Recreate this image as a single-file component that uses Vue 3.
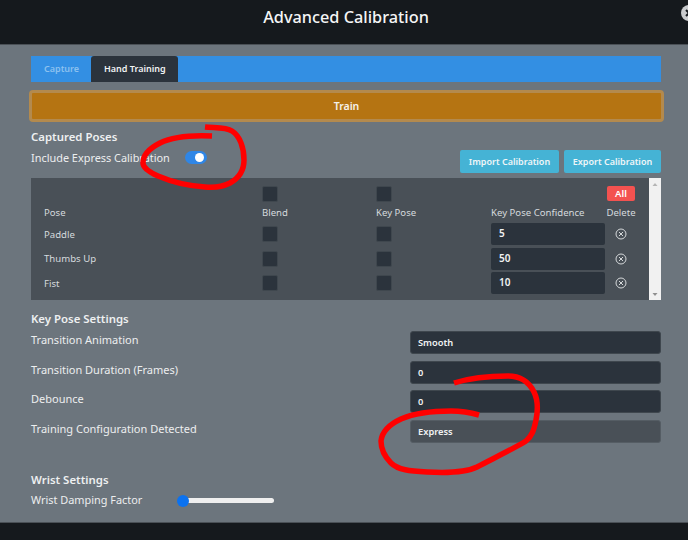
<script setup>
const poses = [
  { name: 'Paddle', confidence: '5' },
  { name: 'Thumbs Up', confidence: '50' },
  { name: 'Fist', confidence: '10' }
]
const settings = [
  { label: 'Transition Animation', value: 'Smooth' },
  { label: 'Transition Duration (Frames)', value: '0' },
  { label: 'Debounce', value: '0' },
  { label: 'Training Configuration Detected', value: 'Express', muted: true }
]
</script>

<template>
  <div class="page">
    <header class="head">
      <h1>Advanced Calibration</h1>
      <span class="close">
        <svg viewBox="0 0 16 16" width="16" height="16"><circle cx="8" cy="8" r="8" fill="#c9cbcd"/><path d="M5 5l6 6M11 5l-6 6" stroke="#15191d" stroke-width="2"/></svg>
      </span>
    </header>

    <main class="body">
      <nav class="tabs">
        <span class="tab">Capture</span>
        <span class="tab active">Hand Training</span>
      </nav>
      <button class="train">Train</button>

      <h2 class="first">Captured Poses</h2>
      <div class="toolbar">
        <div class="inc">
          <span>Include Express Calibration</span>
          <span class="switch"><i></i></span>
        </div>
        <div class="actions">
          <button class="info import">Import Calibration</button>
          <button class="info export">Export Calibration</button>
        </div>
      </div>

      <section class="panel">
        <div class="table">
          <div class="row top">
            <span></span>
            <span class="box"></span>
            <span class="box"></span>
            <span></span>
            <span class="del"><b class="all">All</b></span>
          </div>
          <div class="row labels">
            <span>Pose</span><span>Blend</span><span>Key Pose</span><span>Key Pose Confidence</span><span class="del">Delete</span>
          </div>
          <div v-for="p in poses" :key="p.name" class="row pose">
            <span>{{ p.name }}</span>
            <span class="box"></span>
            <span class="box"></span>
            <span class="conf">{{ p.confidence }}</span>
            <span class="del">
              <svg viewBox="0 0 12 12" width="12" height="12" fill="none" stroke="#d5d8da" stroke-width="1"><circle cx="6" cy="6" r="5"/><path d="M4 4l4 4M8 4l-4 4"/></svg>
            </span>
          </div>
        </div>
        <div class="scroll">
          <svg viewBox="0 0 12 122" width="12" height="122"><path d="M3.500 8L6 5l2.500 3z" fill="#b5b5b5"/><path d="M3.500 115L6 118l2.500-3z" fill="#8f8f8f"/></svg>
        </div>
      </section>

      <h2 class="key">Key Pose Settings</h2>
      <div class="settings">
        <div v-for="s in settings" :key="s.label" class="setting">
          <span class="lab">{{ s.label }}</span>
          <span class="field" :class="{ muted: s.muted }">{{ s.value }}</span>
        </div>
      </div>

      <h2 class="wrist">Wrist Settings</h2>
      <div class="damp">
        <span>Wrist Damping Factor</span>
        <span class="slider"><i></i></span>
      </div>
    </main>

    <footer class="foot"></footer>

    <svg class="ink" viewBox="0 0 688 540" width="688" height="540" fill="none" stroke="#ff0000" stroke-width="5.500" stroke-linecap="butt" stroke-linejoin="round">
      <path d="M205 127C215 128 226 127 232 131C240 136 244 148 244 160C244 170 239 178 230 183C222 187 214 188 205 187C190 186 172 182 158 176C149 172 143 168 143 163C143 155 150 148 160 143C172 137 190 135 212 136"/>
      <path d="M454 383C470 378 490 376 508 376C522 376 530 384 534 392C538 400 538 410 536 420C534 430 532 436 526 441C515 448 490 460 477 467C465 473 445 473 427 472C410 471 398 470 391 463C384 456 381 448 381 441C382 432 388 425 401 419C415 413 435 411 451 411C462 411 472 413 479 415"/>
    </svg>
  </div>
</template>

<style>
html, body { margin: 0; background: #6c757d; }
</style>

<style scoped>
.page {
  position: relative;
  width: 688px;
  height: 540px;
  overflow: hidden;
  display: flex;
  flex-direction: column;
  font-family: "Noto Sans", "Open Sans", sans-serif;
  font-size: 11px;
  color: #eceeef;
  background: #6c757d;
}
.head {
  position: relative;
  height: 44px;
  flex: none;
  background: #15191d;
  border-bottom: 1px solid #4a5056;
  display: flex;
  justify-content: center;
}
.head h1 {
  margin: 6px 0 0 4px;
  font-size: 16.300px;
  line-height: 22px;
  font-weight: 500;
  color: #f4f5f6;
}
.close { position: absolute; top: 5px; left: 681px; line-height: 0; }
.body { flex: 1; padding: 11px 27px 0 31px; display: flex; flex-direction: column; }
.tabs { height: 26px; background: #338fe3; display: flex; }
.tab {
  padding: 0 12px 0 13px;
  line-height: 26px;
  font-size: 9px;
  font-weight: 600;
  color: #8cc1ef;
}
.tab.active {
  background: #2b333c;
  color: #f2f4f5;
  border-radius: 3px 3px 0 0;
}
.train {
  margin: 8px -3px 0 -2px;
  height: 32px;
  padding: 0;
  border: 3px solid #b38a4e;
  border-radius: 4px;
  background: #b57412;
  color: #f5f1ea;
  font: 600 10.500px "Noto Sans", sans-serif;
}
h2 { margin: 0; font-size: 11.400px; line-height: 16px; font-weight: 600; color: #eef0f1; }
h2.first { margin-top: 7px; }
.toolbar { display: flex; justify-content: space-between; height: 33px; }
.inc { display: flex; align-items: center; height: 20px; margin-top: 2px; gap: 15px; font-size: 10.900px; }
.switch { width: 22px; height: 13px; border-radius: 7px; background: #2f86e6; position: relative; display: block; }
.switch i { position: absolute; right: 3px; top: 2px; width: 9px; height: 9px; border-radius: 50%; background: #fff; }
.actions { display: flex; gap: 5px; margin-top: 5px; }
.info {
  height: 23px;
  padding: 0;
  border: 0;
  border-radius: 2px;
  background: #45b3d5;
  color: #f0f6f8;
  font: 600 9px "Noto Sans", sans-serif;
}
.import { width: 99px; }
.export { width: 97px; }
.panel { display: flex; height: 122px; background: #495057; }
.table { flex: 1; padding: 7px 0 0 13px; }
.row { display: grid; grid-template-columns: 218px 114px 115px 116px 28px; align-items: center; color: #d5dadd; font-size: 9.600px; }
.top { height: 17px; }
.labels { height: 20px; }
.pose { height: 24.500px; }
.box {
  display: block;
  width: 16px;
  height: 16px;
  box-sizing: border-box;
  border: 1px solid #3f474e;
  border-radius: 2px;
  background: #2b333c;
}
.conf {
  display: block;
  width: 114px;
  height: 22px;
  box-sizing: border-box;
  padding-left: 8px;
  line-height: 21px;
  border-radius: 2px;
  background: #2b333c;
  color: #f0f2f3;
  font-weight: 600;
  font-size: 10px;
}
.del { display: flex; justify-content: center; line-height: 0; }
.labels .del { line-height: normal; }
.all {
  flex: none;
  width: 28px;
  height: 15px;
  line-height: 15px;
  border-radius: 2px;
  background: #f35250;
  color: #fff;
  text-align: center;
  font-weight: 600;
  font-size: 9.500px;
}
.scroll { width: 12px; flex: none; background: #f1f1f1; line-height: 0; }
h2.key { margin-top: 11px; }
.settings { display: flex; flex-direction: column; margin-top: 4px; gap: 6.700px; }
.setting { display: grid; grid-template-columns: 379px 251px; height: 23px; font-size: 11px; }
.lab { line-height: 17px; }
.field {
  display: block;
  height: 23px;
  padding-left: 7px;
  line-height: 21px;
  box-sizing: border-box;
  border: 1px solid #3f474e;
  border-radius: 3px;
  background: #2b333c;
  color: #f0f2f3;
  font-size: 9.300px;
  font-weight: 600;
}
.field.muted { background: #495057; border-color: #555d64; }
h2.wrist { margin-top: 29px; }
.damp { display: flex; align-items: center; gap: 41px; margin-top: 3px; height: 16px; font-size: 10.900px; }
.slider { position: relative; display: block; width: 91px; height: 5px; margin-top: 3px; border-radius: 3px; background: #efefef; }
.slider i { position: absolute; left: -6px; top: -3.500px; width: 12px; height: 12px; border-radius: 50%; background: #0b72f0; }
.foot { height: 18px; flex: none; background: #15191d; border-top: 1px solid #4a5056; box-sizing: border-box; }
.ink { position: absolute; inset: 0; pointer-events: none; }
</style>
